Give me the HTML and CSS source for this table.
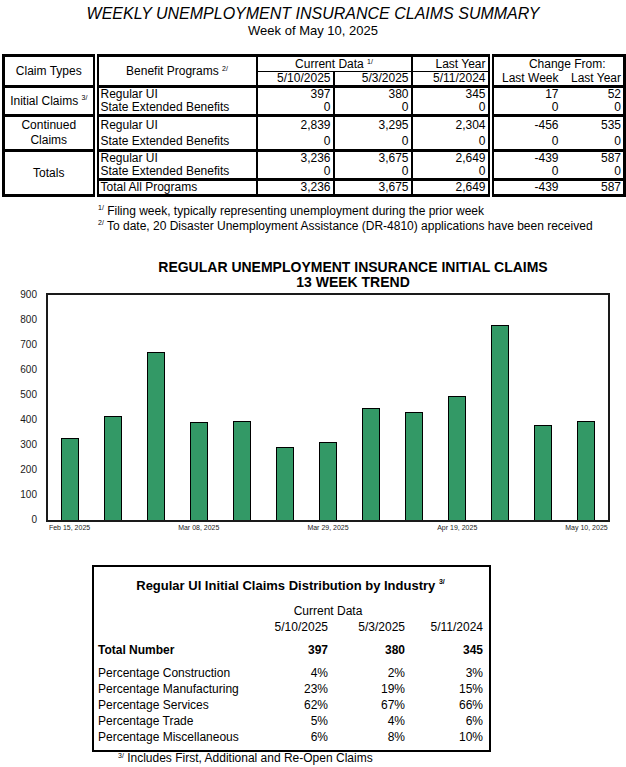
FILE: index.html
```html
<!DOCTYPE html>
<html lang="en">
<head>
    <meta charset="UTF-8">
    <meta name="viewport" content="width=device-width, initial-scale=1.0">
    <title>Weekly Unemployment Insurance Claims Summary</title>
    <link rel="stylesheet" href="styles.css">
</head>
<body>
    <div class="header">
        <div class="title">WEEKLY UNEMPLOYMENT INSURANCE CLAIMS SUMMARY</div>
        <div class="subtitle">Week of May 10, 2025</div>
    </div>

    <table class="claims">
        <colgroup>
            <col style="width: 92px">
            <col style="width: 161px">
            <col style="width: 77px">
            <col style="width: 78px">
            <col style="width: 79px">
            <col style="width: 70px">
            <col style="width: 64px">
        </colgroup>
        <tr class="hd1">
            <td class="type head-end" rowspan="2">Claim Types</td>
            <td class="prog head-end center" rowspan="2">Benefit Programs <sup>2/</sup></td>
            <td class="n3 center thin" colspan="2">Current Data <sup>1/</sup></td>
            <td class="n5 thin">Last Year</td>
            <td class="n6 center change" colspan="2">Change From:</td>
        </tr>
        <tr class="hd2">
            <td class="n3 head-end">5/10/2025</td>
            <td class="n4 head-end">5/3/2025</td>
            <td class="n5 head-end">5/11/2024</td>
            <td class="n6 head-end">Last Week</td>
            <td class="n7 head-end">Last Year</td>
        </tr>

        <tr>
            <td class="type group-end" rowspan="2">Initial Claims <sup>3/</sup></td>
            <td class="prog">Regular UI</td>
            <td class="n3">397</td>
            <td class="n4">380</td>
            <td class="n5">345</td>
            <td class="n6">17</td>
            <td class="n7">52</td>
        </tr>
        <tr class="end">
            <td class="prog">State Extended Benefits</td>
            <td class="n3">0</td>
            <td class="n4">0</td>
            <td class="n5">0</td>
            <td class="n6">0</td>
            <td class="n7">0</td>
        </tr>

        <tr class="cont">
            <td class="type group-end" rowspan="2">Continued<br>Claims</td>
            <td class="prog">Regular UI</td>
            <td class="n3">2,839</td>
            <td class="n4">3,295</td>
            <td class="n5">2,304</td>
            <td class="n6">-456</td>
            <td class="n7">535</td>
        </tr>
        <tr class="cont end">
            <td class="prog">State Extended Benefits</td>
            <td class="n3">0</td>
            <td class="n4">0</td>
            <td class="n5">0</td>
            <td class="n6">0</td>
            <td class="n7">0</td>
        </tr>

        <tr>
            <td class="type" rowspan="3">Totals</td>
            <td class="prog">Regular UI</td>
            <td class="n3">3,236</td>
            <td class="n4">3,675</td>
            <td class="n5">2,649</td>
            <td class="n6">-439</td>
            <td class="n7">587</td>
        </tr>
        <tr class="end">
            <td class="prog">State Extended Benefits</td>
            <td class="n3">0</td>
            <td class="n4">0</td>
            <td class="n5">0</td>
            <td class="n6">0</td>
            <td class="n7">0</td>
        </tr>
        <tr>
            <td class="prog">Total All Programs</td>
            <td class="n3">3,236</td>
            <td class="n4">3,675</td>
            <td class="n5">2,649</td>
            <td class="n6">-439</td>
            <td class="n7">587</td>
        </tr>
    </table>

    <div class="notes">
        <div><sup>1/</sup> Filing week, typically representing unemployment during the prior week</div>
        <div><sup>2/</sup> To date, 20 Disaster Unemployment Assistance (DR-4810) applications have been received</div>
    </div>

    <div class="chart">
        <div class="chart-title">REGULAR UNEMPLOYMENT INSURANCE INITIAL CLAIMS<br>13 WEEK TREND</div>
        <div class="chart-body">
            <div class="y-axis">
                <span>900</span><span>800</span><span>700</span><span>600</span><span>500</span>
                <span>400</span><span>300</span><span>200</span><span>100</span><span>0</span>
            </div>
            <div class="plot">
                <div class="slot"><div class="bar" style="height: 36.33%"></div></div>
                <div class="slot"><div class="bar" style="height: 46.22%"></div></div>
                <div class="slot"><div class="bar" style="height: 74.67%"></div></div>
                <div class="slot"><div class="bar" style="height: 43.56%"></div></div>
                <div class="slot"><div class="bar" style="height: 44%"></div></div>
                <div class="slot"><div class="bar" style="height: 32.44%"></div></div>
                <div class="slot"><div class="bar" style="height: 34.67%"></div></div>
                <div class="slot"><div class="bar" style="height: 49.78%"></div></div>
                <div class="slot"><div class="bar" style="height: 48%"></div></div>
                <div class="slot"><div class="bar" style="height: 55.11%"></div></div>
                <div class="slot"><div class="bar" style="height: 86.67%"></div></div>
                <div class="slot"><div class="bar" style="height: 42.22%"></div></div>
                <div class="slot"><div class="bar" style="height: 44.11%"></div></div>
            </div>
        </div>
        <div class="x-axis">
            <div class="tick">Feb 15, 2025</div><div class="tick"></div><div class="tick"></div>
            <div class="tick">Mar 08, 2025</div><div class="tick"></div><div class="tick"></div>
            <div class="tick">Mar 29, 2025</div><div class="tick"></div><div class="tick"></div>
            <div class="tick">Apr 19, 2025</div><div class="tick"></div><div class="tick"></div>
            <div class="tick">May 10, 2025</div>
        </div>
    </div>

    <div class="industry">
        <div class="ind-title">Regular UI Initial Claims Distribution by Industry <sup>3/</sup></div>
        <div class="ind-row ind-current"><div class="span2">Current Data</div></div>
        <div class="ind-row">
            <div></div><div class="val">5/10/2025</div><div class="val">5/3/2025</div><div class="val">5/11/2024</div>
        </div>
        <div class="ind-row ind-total">
            <div>Total Number</div><div class="val">397</div><div class="val">380</div><div class="val">345</div>
        </div>
        <div class="ind-list">
            <div class="ind-row">
                <div>Percentage Construction</div><div class="val">4%</div><div class="val">2%</div><div class="val">3%</div>
            </div>
            <div class="ind-row">
                <div>Percentage Manufacturing</div><div class="val">23%</div><div class="val">19%</div><div class="val">15%</div>
            </div>
            <div class="ind-row">
                <div>Percentage Services</div><div class="val">62%</div><div class="val">67%</div><div class="val">66%</div>
            </div>
            <div class="ind-row">
                <div>Percentage Trade</div><div class="val">5%</div><div class="val">4%</div><div class="val">6%</div>
            </div>
            <div class="ind-row">
                <div>Percentage Miscellaneous</div><div class="val">6%</div><div class="val">8%</div><div class="val">10%</div>
            </div>
        </div>
    </div>
    <div class="ind-note"><sup>3/</sup> Includes First, Additional and Re-Open Claims</div>
</body>
</html>
```

FILE: styles.css
```css
body {
    margin: 0;
    font-family: "Liberation Sans", Arial, sans-serif;
    color: #000;
    background-color: #fff;
}

sup {
    font-size: 7px;
    line-height: 1;
    vertical-align: top;
}

.header {
    text-align: center;
    padding-top: 5px;
}

.title {
    font-size: 16px;
    font-style: italic;
    line-height: 18px;
}

.subtitle {
    font-size: 13px;
    line-height: 15px;
}

/* summary table */
.claims {
    margin: 16px 0 0 2px;
    width: 621px;
    table-layout: fixed;
    border-collapse: collapse;
    border: 3px solid #000;
    font-size: 12px;
}

.claims td {
    padding: 0 2px;
    height: 13px;
    line-height: 13px;
    white-space: nowrap;
    text-align: right;
    vertical-align: middle;
}

.claims .hd1 td {
    height: 14px;
}

.claims .cont td {
    height: 16px;
}

.claims td.type {
    text-align: center;
    white-space: normal;
    line-height: 15px;
}

.claims td.prog {
    text-align: left;
    border-left: 6px double #000;
}

.claims td.center {
    text-align: center;
}

.claims td.change {
    padding-left: 20px;
}

.claims td.n3,
.claims td.n4,
.claims td.n5 {
    border-left: 2px solid #000;
}

.claims td.n6 {
    border-left: 6px double #000;
}

.claims td.thin {
    border-bottom: 1px solid #000;
}

.claims td.head-end,
.claims td.group-end,
.claims .end td {
    border-bottom: 3px solid #000;
}

.notes {
    margin: 7px 0 0 98px;
    font-size: 12px;
    line-height: 15px;
}

/* bar chart */
.chart {
    margin-top: 26px;
}

.chart-title {
    margin-left: 80px;
    width: 546px;
    text-align: center;
    font-size: 14px;
    font-weight: bold;
    line-height: 15px;
}

.chart-body {
    display: flex;
    align-items: flex-start;
    margin-top: 3px;
}

.y-axis {
    width: 46px;
    height: 237px;
    margin: -4px 0 -4px 0;
    padding-right: 9px;
    box-sizing: border-box;
    display: flex;
    flex-direction: column;
    justify-content: space-between;
    align-items: flex-end;
    font-size: 10px;
    line-height: 12px;
    color: #1a1a1a;
}

.plot {
    width: 560px;
    height: 225px;
    border: 2px solid #1a1a1a;
    display: flex;
}

.slot {
    flex: 1;
    display: flex;
    justify-content: center;
    align-items: flex-end;
}

.bar {
    width: 18px;
    box-sizing: border-box;
    background-color: #339966;
    border: 1.5px solid #000;
    border-bottom: none;
}

.x-axis {
    display: flex;
    margin: 1px 0 0 48px;
    width: 560px;
}

.tick {
    flex: 1;
    display: flex;
    justify-content: center;
    font-size: 7px;
    line-height: 9px;
    white-space: nowrap;
    color: #222;
}

/* industry box */
.industry {
    margin: 33px 0 0 92px;
    width: 399px;
    box-sizing: border-box;
    border: 2px solid #000;
    padding: 11px 6px 5px 4px;
    font-size: 12px;
}

.ind-title {
    text-align: center;
    font-size: 13px;
    font-weight: bold;
    line-height: 15px;
}

.ind-row {
    display: grid;
    grid-template-columns: 153px 77px 77px 78px;
    line-height: 16px;
}

.ind-row .val {
    text-align: right;
}

.ind-current {
    margin-top: 10px;
}

.ind-current .span2 {
    grid-column: 2 / 4;
    text-align: center;
}

.ind-total {
    margin-top: 7px;
    font-weight: bold;
}

.ind-list {
    margin-top: 7px;
}

.ind-note {
    margin: 0 0 0 118px;
    font-size: 12px;
    line-height: 13px;
}
```
